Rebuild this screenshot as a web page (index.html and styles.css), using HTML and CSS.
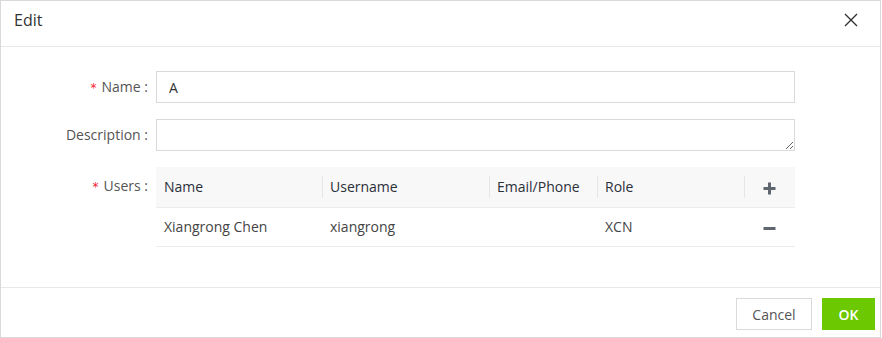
FILE: index.html
```html
<!DOCTYPE html>
<html>
<head>
<meta charset="utf-8">
<link rel="stylesheet" href="styles.css">
</head>
<body>
<div class="dialog">
  <div class="dialog-header">
    <span class="dialog-title">Edit</span>
    <button class="close-btn" aria-label="Close">
      <svg width="14" height="14" viewBox="0 0 14 14"><path d="M1 1L13 13M13 1L1 13" stroke="#333" stroke-width="1.4" fill="none"/></svg>
    </button>
  </div>
  <div class="dialog-body">
    <div class="form-row">
      <label class="form-label"><span class="req">*</span>Name :</label>
      <div class="form-control"><input class="text-input" type="text" value="A"></div>
    </div>
    <div class="form-row">
      <label class="form-label">Description :</label>
      <div class="form-control"><textarea class="text-area"></textarea></div>
    </div>
    <div class="form-row users-row">
      <label class="form-label"><span class="req">*</span>Users :</label>
      <div class="form-control">
        <table class="users-table">
          <thead>
            <tr>
              <th class="c-name">Name</th>
              <th class="c-user"><span class="sep"></span>Username</th>
              <th class="c-email"><span class="sep"></span>Email/Phone</th>
              <th class="c-role"><span class="sep"></span>Role</th>
              <th class="c-act"><span class="sep"></span>
                <svg width="13" height="13" viewBox="0 0 13 13"><path d="M6.5 0.5V12.5M0.5 6.5H12.5" stroke="#5f6670" stroke-width="3" fill="none"/></svg>
              </th>
            </tr>
          </thead>
          <tbody>
            <tr>
              <td>Xiangrong Chen</td>
              <td>xiangrong</td>
              <td></td>
              <td>XCN</td>
              <td class="c-act">
                <svg width="13" height="13" viewBox="0 0 13 13"><path d="M0.5 6.5H12.5" stroke="#5f6670" stroke-width="3" fill="none"/></svg>
              </td>
            </tr>
          </tbody>
        </table>
      </div>
    </div>
  </div>
  <div class="dialog-footer">
    <button class="btn btn-default">Cancel</button>
    <button class="btn btn-primary">OK</button>
  </div>
</div>
</body>
</html>
```

FILE: styles.css
```css
* { box-sizing: border-box; }
html, body { margin: 0; padding: 0; background: #fff; }
body {
  font-family: "Open Sans", "Noto Sans", sans-serif;
  font-size: 14px;
  color: #444;
}
.dialog {
  width: 881px;
  height: 338px;
  border: 1px solid #d9d9d9;
  display: flex;
  flex-direction: column;
  background: #fff;
}
.dialog-header {
  height: 46px;
  border-bottom: 1px solid #e8e8e8;
  display: flex;
  align-items: center;
  justify-content: space-between;
  padding: 0 22px 0 13px;
  flex: none;
}
.dialog-title {
  font-size: 16px;
  color: #333;
  margin-top: -7px;
}
.close-btn {
  border: 0;
  background: none;
  padding: 0;
  width: 14px;
  height: 14px;
  display: flex;
  margin-top: -7px;
}
.dialog-body {
  flex: 1;
  padding: 24px 84px 0 0;
  display: flex;
  flex-direction: column;
  gap: 16px;
}
.form-row {
  display: grid;
  grid-template-columns: 147px 1fr;
  column-gap: 8px;
  align-items: start;
}
.form-label {
  text-align: right;
  color: #555;
  height: 32px;
  line-height: 32px;
  white-space: nowrap;
}
.users-row .form-label { height: 38px; line-height: 38px; }
.req {
  color: #f5222d;
  margin-right: 5px;
  font-family: "DejaVu Sans", sans-serif;
  font-size: 12px;
}
.text-input {
  width: 639px;
  height: 32px;
  border: 1px solid #d9d9d9;
  padding: 0 12px;
  font: inherit;
  color: #333;
  outline: none;
  display: block;
}
.text-area {
  width: 639px;
  height: 32px;
  border: 1px solid #d9d9d9;
  font: inherit;
  display: block;
  resize: vertical;
  outline: none;
}
.users-table {
  width: 639px;
  border-collapse: collapse;
  table-layout: fixed;
}
.users-table th {
  background: #f8f8f8;
  height: 40px;
  text-align: left;
  font-weight: 500;
  color: #2b2f38;
  padding: 0 8px;
  position: relative;
  border-bottom: 1px solid #ececec;
}
.users-table td {
  height: 39px;
  padding: 0 8px;
  color: #444;
  border-bottom: 1px solid #ececec;
}
.sep {
  position: absolute;
  left: 0;
  top: 9px;
  height: 22px;
  width: 1px;
  background: #e6e6e6;
}
.c-name { width: 166px; }
.c-user { width: 167px; }
.c-email { width: 108px; }
.c-role { width: 147px; }
.c-act { text-align: center !important; }
.c-act svg { display: inline-block; vertical-align: middle; }
.dialog-footer {
  height: 50px;
  border-top: 1px solid #e8e8e8;
  display: flex;
  justify-content: flex-end;
  align-items: flex-start;
  gap: 10px;
  padding: 10px 5px 0 0;
  flex: none;
}
.btn {
  height: 32px;
  font: inherit;
  font-size: 14px;
  border-radius: 0;
  cursor: pointer;
}
.btn-default {
  width: 76px;
  background: #fff;
  border: 1px solid #d9d9d9;
  color: #555;
}
.btn-primary {
  width: 53px;
  background: #6cc800;
  border: 1px solid #6cc800;
  color: #fff;
  font-weight: 600;
}
```
